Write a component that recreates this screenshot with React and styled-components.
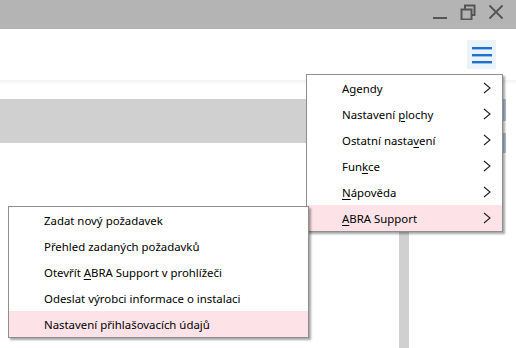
import React from 'react'
import styled, { createGlobalStyle } from 'styled-components'

const GlobalStyle = createGlobalStyle`
  html, body {
    margin: 0;
    padding: 0;
    background: #ffffff;
  }
  body {
    font-family: "Noto Sans", "Liberation Sans", sans-serif;
    overflow: hidden;
  }
`

const mainItems = [
  { label: 'Agendy', key: 1 },
  { label: 'Nastavení plochy', key: 10 },
  { label: 'Ostatní nastavení', key: 13 },
  { label: 'Funkce', key: 3 },
  { label: 'Nápověda', key: 0 },
  { label: 'ABRA Support', key: 0, active: true },
]

const supportItems = [
  { label: 'Zadat nový požadavek' },
  { label: 'Přehled zadaných požadavků' },
  { label: 'Otevřít ABRA Support v prohlížeči', key: 8 },
  { label: 'Odeslat výrobci informace o instalaci' },
  { label: 'Nastavení přihlašovacích údajů', active: true },
]

const Label = ({ text, at }) => {
  if (at === undefined) return <>{text}</>
  return (
    <>
      {text.slice(0, at)}
      <AccessKey>{text[at]}</AccessKey>
      {text.slice(at + 1)}
    </>
  )
}

const Chevron = () => (
  <svg width="8" height="12" viewBox="0 0 8 12">
    <polyline points="1,1 7,6 1,11" fill="none" stroke="#222" strokeWidth="1.1" />
  </svg>
)

const App = () => {
  return (
    <Page>
      <GlobalStyle />
      <TitleBar>
        <WinButton>
          <svg width="16" height="16" viewBox="0 0 16 16">
            <rect x="1" y="13" width="14" height="2" fill="#555" />
          </svg>
        </WinButton>
        <WinButton>
          <svg width="16" height="16" viewBox="0 0 16 16">
            <rect x="1.5" y="5.5" width="10" height="10" fill="none" stroke="#555" strokeWidth="2" />
            <polyline points="5,5 5,1.5 14.5,1.5 14.5,11 12,11" fill="none" stroke="#555" strokeWidth="2" />
          </svg>
        </WinButton>
        <WinButton>
          <svg width="16" height="16" viewBox="0 0 16 16">
            <path d="M1.5 1.5 L14.5 14.5 M14.5 1.5 L1.5 14.5" stroke="#555" strokeWidth="1.8" />
          </svg>
        </WinButton>
      </TitleBar>

      <Toolbar>
        <MenuButton>
          <svg width="20" height="18" viewBox="0 0 20 18">
            <rect x="0" y="1" width="20" height="2.4" fill="#1f6fd1" />
            <rect x="0" y="8" width="20" height="2.4" fill="#1f6fd1" />
            <rect x="0" y="15" width="20" height="2.4" fill="#1f6fd1" />
          </svg>
        </MenuButton>
      </Toolbar>
      <ToolbarShadow />

      <Content>
        <TabStrip>
          <TabBar />
          <EdgeTab $h={22} />
        </TabStrip>
        <EdgeRow>
          <EdgeTab $h={20} />
        </EdgeRow>
        <Body>
          <LeftPane />
          <Splitter />
        </Body>
      </Content>

      <MainMenu>
        {mainItems.map((item) => (
          <MenuItem key={item.label} $active={item.active}>
            <span>
              <Label text={item.label} at={item.key} />
            </span>
            <Chevron />
          </MenuItem>
        ))}
      </MainMenu>

      <SubMenu>
        {supportItems.map((item) => (
          <MenuItem key={item.label} $active={item.active}>
            <span>
              <Label text={item.label} at={item.key} />
            </span>
          </MenuItem>
        ))}
      </SubMenu>
    </Page>
  )
}

const Page = styled.div`
  position: relative;
  width: 516px;
  height: 348px;
  overflow: hidden;
  background: #ffffff;
`

const TitleBar = styled.div`
  height: 29px;
  background: #b4b4b4;
  display: flex;
  justify-content: flex-end;
  align-items: flex-start;
  padding-right: 12px;
  box-sizing: border-box;
  gap: 12px;
  padding-top: 4px;
`

const WinButton = styled.div`
  width: 16px;
  height: 16px;
  display: flex;
`

const Toolbar = styled.div`
  height: 51px;
  display: flex;
  justify-content: flex-end;
  align-items: flex-start;
  padding: 11px 20px 0 0;
  box-sizing: border-box;
`

const MenuButton = styled.div`
  width: 29px;
  height: 29px;
  background: #eaf2fb;
  display: flex;
  align-items: center;
  justify-content: center;
`

const ToolbarShadow = styled.div`
  height: 5px;
  background: linear-gradient(#f2f2f2, #ffffff);
`

const Content = styled.div`
  padding-top: 14px;
  display: flex;
  flex-direction: column;
`

const TabStrip = styled.div`
  display: flex;
  align-items: flex-start;
`

const TabBar = styled.div`
  width: 503px;
  height: 44px;
  background: #d0d0d0;
`

const EdgeRow = styled.div`
  display: flex;
  justify-content: flex-end;
  padding-right: 10px;
  margin-top: -10px;
`

const EdgeTab = styled.div`
  width: 3px;
  height: ${(p) => p.$h}px;
  background: #b9cadd;
`

const Body = styled.div`
  display: flex;
  height: 220px;
`

const LeftPane = styled.div`
  width: 399px;
`

const Splitter = styled.div`
  width: 10px;
  background: #d0d0d0;
`

const MenuPanel = styled.div`
  position: absolute;
  background: #ffffff;
  border: 1px solid #8d8d92;
  box-shadow: 2px 2px 2px rgba(0, 0, 0, 0.35);
  display: flex;
  flex-direction: column;
`

const MainMenu = styled(MenuPanel)`
  left: 306px;
  top: 74px;
  width: 195px;
`

const SubMenu = styled(MenuPanel)`
  left: 8px;
  top: 206px;
  width: 299px;
`

const MenuItem = styled.div`
  height: 26px;
  display: flex;
  align-items: center;
  justify-content: space-between;
  padding: 0 11px 0 35px;
  font-size: 11.4px;
  color: #000000;
  background: ${(p) => (p.$active ? '#fde3e7' : 'transparent')};
  white-space: nowrap;
`

const AccessKey = styled.u`
  text-decoration-thickness: 1px;
  text-underline-offset: 2px;
`

export default App
